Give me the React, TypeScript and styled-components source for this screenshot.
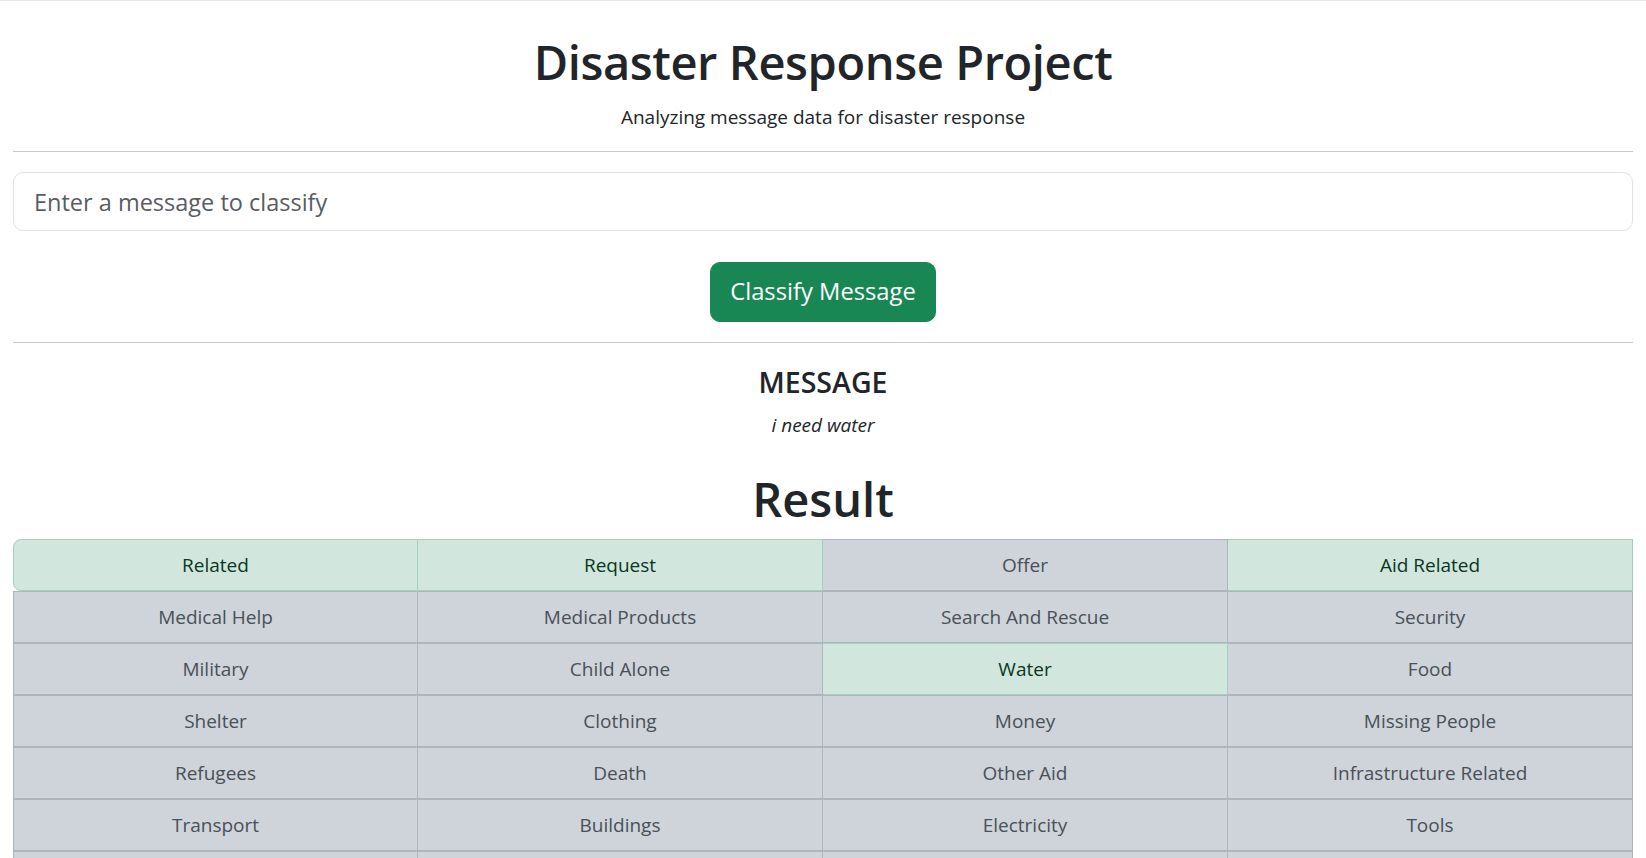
import React from "react";
import styled, { createGlobalStyle } from "styled-components";

const Global = createGlobalStyle`
  html { scrollbar-width: none; }
  html::-webkit-scrollbar { display: none; }
  body {
    margin: 0;
    font-family: "Open Sans", "Noto Sans", sans-serif;
    color: #212529;
    background: #fff;
  }
  * { box-sizing: border-box; }
`;

const Page = styled.div`
  border-top: 1px solid #e3e6ea;
  padding: 0 13px;
`;

const Header = styled.header`
  text-align: center;
  padding-top: 28px;
`;

const Title = styled.h1`
  margin: 0;
  font-size: 47px;
  font-weight: 600;
  letter-spacing: -0.4px;
  line-height: 67px;
`;

const Lead = styled.p`
  margin: 6px 0 0;
  font-size: 19px;
  line-height: 30px;
`;

const Rule = styled.hr<{ $top: number }>`
  margin: ${(p) => p.$top}px 0 0;
  border: 0;
  border-top: 1px solid #c8c9ca;
`;

const Form = styled.form`
  display: flex;
  flex-direction: column;
  align-items: center;
  padding-top: 20px;
`;

const Input = styled.input`
  width: 100%;
  height: 59px;
  padding: 10px 20px;
  font-family: inherit;
  font-size: 23.5px;
  color: #212529;
  border: 1px solid #dee2e6;
  border-radius: 10px;
  outline: none;
  &::placeholder { color: #595c5f; }
`;

const Button = styled.button`
  margin-top: 31px;
  height: 60px;
  padding: 0 19px;
  background: #198754;
  color: #fff;
  border: 1px solid #198754;
  border-radius: 10px;
  font-family: inherit;
  font-size: 23.75px;
  line-height: 1.5;
`;

const MessageBlock = styled.section`
  text-align: center;
  padding-top: 21px;
`;

const MessageLabel = styled.h4`
  margin: 0;
  font-size: 28.5px;
  font-weight: 600;
  line-height: 36px;
`;

const MessageText = styled.p`
  margin: 10px 0 0;
  font-size: 19px;
  line-height: 30px;
  font-style: italic;
`;

const ResultTitle = styled.h1`
  margin: 29px 0 0;
  font-size: 47px;
  font-weight: 600;
  line-height: 60px;
  text-align: center;
`;

const Table = styled.div`
  margin-top: 10px;
  display: flex;
  flex-direction: column;
`;

const Row = styled.ul`
  display: grid;
  grid-template-columns: repeat(4, 1fr);
  margin: 0;
  padding: 0;
  list-style: none;
`;

const Cell = styled.li<{ $ok: boolean; $first: boolean; $rounded: boolean }>`
  padding: 10px 20px;
  font-size: 19px;
  line-height: 30px;
  text-align: center;
  background: ${(p) => (p.$ok ? "#d1e7dd" : "#ced4da")};
  color: ${(p) => (p.$ok ? "#0a3622" : "#495057")};
  border: 1px solid ${(p) => (p.$ok ? "#a3cfbb" : "#adb5bd")};
  border-left-width: ${(p) => (p.$first ? "1px" : "0")};
  border-radius: ${(p) => (p.$rounded ? "8px 0 0 8px" : "0")};
`;

const categories = [
  "Related", "Request", "Offer", "Aid Related",
  "Medical Help", "Medical Products", "Search And Rescue", "Security",
  "Military", "Child Alone", "Water", "Food",
  "Shelter", "Clothing", "Money", "Missing People",
  "Refugees", "Death", "Other Aid", "Infrastructure Related",
  "Transport", "Buildings", "Electricity", "Tools",
  "Hospitals", "Shops", "Aid Centers", "Other Infrastructure",
  "Weather Related", "Floods", "Storm", "Fire",
  "Earthquake", "Cold", "Other Weather", "Direct Report",
];

const positive = new Set(["Related", "Request", "Aid Related", "Water"]);

export default function App() {
  const rows: string[][] = [];
  for (let i = 0; i < categories.length; i += 4) rows.push(categories.slice(i, i + 4));
  return (
    <>
      <Global />
      <Page>
        <Header>
          <Title>Disaster Response Project</Title>
          <Lead>Analyzing message data for disaster response</Lead>
        </Header>
        <Rule $top={19} />
        <Form onSubmit={(e) => e.preventDefault()}>
          <Input placeholder="Enter a message to classify" />
          <Button type="submit">Classify Message</Button>
        </Form>
        <Rule $top={20} />
        <MessageBlock>
          <MessageLabel>MESSAGE</MessageLabel>
          <MessageText>i need water</MessageText>
        </MessageBlock>
        <ResultTitle>Result</ResultTitle>
        <Table>
          {rows.map((r, ri) => (
            <Row key={ri}>
              {r.map((c, ci) => (
                <Cell key={c} $ok={positive.has(c)} $first={ci === 0} $rounded={ri === 0 && ci === 0}>
                  {c}
                </Cell>
              ))}
            </Row>
          ))}
        </Table>
      </Page>
    </>
  );
}
